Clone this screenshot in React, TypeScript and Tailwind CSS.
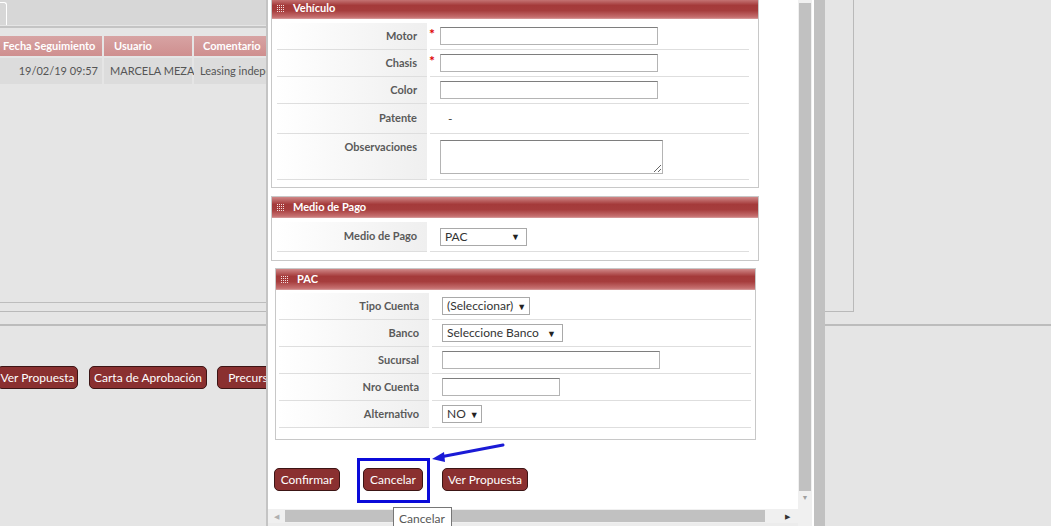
import React from 'react'

const headerBg = "bg-[linear-gradient(#d08888,#a43a3a_35%,#a63d3d_60%,#c67070_92%,#d9a3a3)]";

function Grip() {
    const dots = [];
    for (let r = 0; r < 4; r++) for (let c = 0; c < 4; c++) dots.push(<rect key={`${r}-${c}`} x={c * 2} y={r * 2} width="1" height="1" fill="#f3dede" />);
    return <svg width="8" height="8" viewBox="0 0 8 8" className="shrink-0">{dots}</svg>;
}

function BoxHeader({ title }: { title: string }) {
    return (
        <div className={`flex h-[21px] items-center gap-[8px] pl-[5px] ${headerBg}`}>
            <Grip />
            <span className="text-[11px] font-bold text-white">{title}</span>
        </div>
    );
}

function Row({ label, h, top, req, children }: { label: string; h: string; top?: boolean; req?: boolean; children?: React.ReactNode }) {
    return (
        <div className={`flex ${h}`}>
            <div className={`flex w-[150px] justify-end border-b border-[#dedede] bg-linear-to-r from-white to-[#efefef] pr-[10px] text-[11px] font-bold text-[#5a5a5a] ${top ? 'items-start pt-[5px]' : 'items-center'}`}>
                {label}
            </div>
            <div className="ml-[3px] flex flex-1 items-center border-b border-[#dedede]">
                <div className="flex w-[10px] self-start">
                    {req && <span className="ml-[-1px] mt-[4px] text-[14px] font-bold leading-none text-[#dd0000]">*</span>}
                </div>
                {children}
            </div>
        </div>
    );
}

function TextInput({ w }: { w: string }) {
    return <input className={`h-[18px] ${w} border border-[#b4b4b4] border-t-[#7e7e7e] bg-white`} />;
}

function Select({ w, text }: { w: string; text: string }) {
    return (
        <div className={`flex h-[18px] ${w} items-center justify-between gap-[4px] border border-[#a9a9a9] bg-white pl-[4px] pr-[6px] text-[12px] text-[#333]`}>
            <span className="whitespace-nowrap">{text}</span>
            <span className="text-[9px] leading-none text-[#222]">▼</span>
        </div>
    );
}

function Btn({ children, className = '' }: { children: React.ReactNode; className?: string }) {
    return (
        <div className={`flex h-[23px] items-center justify-center whitespace-nowrap rounded-[5px] border border-[#3c1515] bg-[#8a3030] text-[12px] text-white ${className}`}>
            {children}
        </div>
    );
}

export default function App() {
    return (
        <div className="relative h-[526px] w-[1051px] overflow-hidden bg-[#e5e5e5] font-['Lato','Open_Sans',sans-serif]">
            {/* page behind the dialog */}
            <div className="flex h-[312px] w-[854px] flex-col border-r border-b border-[#b9b9b9]">
                <div className="h-[28px] w-[800px] border-b-2 border-[#c4c4c4]">
                    <div className="h-[25px] bg-[#d7d7d7] pt-[2px]">
                        <div className="h-[23px] w-[7px] rounded-tr-[3px] border-t border-r border-white" />
                    </div>
                </div>
                <div className="mt-[8px] flex gap-[2px] whitespace-nowrap text-[11px]">
                    <div className="flex h-[20px] w-[102px] items-center bg-[linear-gradient(#d7a3a3,#cf8f8f)] pl-[3px] font-bold text-white">Fecha Seguimiento</div>
                    <div className="flex h-[20px] w-[88px] items-center bg-[linear-gradient(#d7a3a3,#cf8f8f)] pl-[10px] font-bold text-white">Usuario</div>
                    <div className="flex h-[20px] w-[200px] items-center bg-[linear-gradient(#d7a3a3,#cf8f8f)] pl-[9px] font-bold text-white">Comentario</div>
                </div>
                <div className="mt-[2px] flex gap-[2px] whitespace-nowrap text-[11px] text-[#555]">
                    <div className="flex h-[26px] w-[102px] items-center justify-end bg-[#dcdcdc] pr-[4px]">19/02/19 09:57</div>
                    <div className="flex h-[26px] w-[88px] items-center bg-[#dcdcdc] pl-[6px]">MARCELA MEZA</div>
                    <div className="flex h-[26px] w-[200px] items-center bg-[#dcdcdc] pl-[6px]">Leasing independiente</div>
                </div>
                <div className="mt-auto mb-[8px] h-px w-[800px] bg-[#bdbdbd]" />
            </div>
            <div className="mt-[12px] h-[2px] w-full bg-[#bcbcbc]" />
            <div className="mt-[40px] flex">
                <Btn className="ml-[-3px] w-[81px]">Ver Propuesta</Btn>
                <Btn className="ml-[11px] w-[118px]">Carta de Aprobación</Btn>
                <Btn className="ml-[10px] w-[68px]">Precursa</Btn>
            </div>

            {/* dialog */}
            <div className="absolute top-0 left-[266px] flex h-[526px] w-[559px] border-l-2 border-[#c4c4c4] bg-white">
                <div className="flex w-[530px] flex-col">
                    <div className="h-[509px] overflow-hidden pl-[3px]">
                        <div className="mt-[-3px] w-[488px] border border-[#c8c8c8] pb-[7px]">
                            <BoxHeader title="Vehículo" />
                            <div className="mt-[4px] pl-[5px] pr-[9px]">
                                <Row label="Motor" h="h-[27px]" req><TextInput w="w-[218px]" /></Row>
                                <Row label="Chasis" h="h-[27px]" req><TextInput w="w-[218px]" /></Row>
                                <Row label="Color" h="h-[27px]"><TextInput w="w-[218px]" /></Row>
                                <Row label="Patente" h="h-[30px]"><span className="pl-[8px] text-[12px] text-[#444]">-</span></Row>
                                <Row label="Observaciones" h="h-[46px]" top>
                                    <textarea className="h-[34px] w-[223px] border border-[#b4b4b4] border-t-[#7e7e7e] bg-white" />
                                </Row>
                            </div>
                        </div>

                        <div className="mt-[8px] w-[488px] border border-[#c8c8c8] pb-[8px]">
                            <BoxHeader title="Medio de Pago" />
                            <div className="mt-[4px] pl-[5px] pr-[9px]">
                                <Row label="Medio de Pago" h="h-[30px]"><Select w="w-[87px]" text="PAC" /></Row>
                            </div>
                        </div>

                        <div className="mt-[7px] ml-[4px] w-[481px] border border-[#c8c8c8] pb-[11px]">
                            <BoxHeader title="PAC" />
                            <div className="mt-[3px] pl-[3px] pr-[4px]">
                                <Row label="Tipo Cuenta" h="h-[27px]"><Select w="w-[88px]" text="(Seleccionar)" /></Row>
                                <Row label="Banco" h="h-[27px]"><Select w="w-[121px]" text="Seleccione Banco" /></Row>
                                <Row label="Sucursal" h="h-[27px]"><TextInput w="w-[218px]" /></Row>
                                <Row label="Nro Cuenta" h="h-[27px]"><TextInput w="w-[118px]" /></Row>
                                <Row label="Alternativo" h="h-[27px]"><Select w="w-[40px]" text="NO" /></Row>
                            </div>
                        </div>

                        <div className="mt-[28px] ml-[3px] flex">
                            <Btn className="w-[66px]">Confirmar</Btn>
                            <Btn className="ml-[23px] w-[60px]">Cancelar</Btn>
                            <Btn className="ml-[19px] w-[86px]">Ver Propuesta</Btn>
                        </div>
                    </div>
                    {/* horizontal scrollbar */}
                    <div className="flex h-[14px] items-center bg-[#f0f0f0]">
                        <div className="flex w-[17px] justify-center text-[7px] text-[#b0b0b0]">◀</div>
                        <div className="h-[12px] w-[480px] bg-[#c1c1c1]" />
                        <div className="flex flex-1 justify-end pr-[8px] text-[7px] text-[#333]">▶</div>
                    </div>
                    <div className="h-[3px] bg-[#ececec]" />
                </div>
                {/* vertical scrollbar */}
                <div className="flex w-[14px] flex-col bg-[#f0f0f0]">
                    <div className="mx-[1px] mt-[3px] h-[488px] bg-[#c1c1c1]" />
                    <div className="mt-[1px] flex justify-center text-[7px] text-[#a0a0a0]">▼</div>
                </div>
                <div className="w-[2px]" />
                <div className="w-[11px] bg-[#c1c1c1]" />
            </div>

            {/* annotation */}
            <div className="absolute top-[458px] left-[357px] h-[45px] w-[73px] border-[3px] border-[#0b0bd9]" />
            <svg className="absolute top-[440px] left-[428px]" width="80" height="24" viewBox="0 0 80 24">
                <line x1="75" y1="5" x2="12" y2="17" stroke="#1a1ad6" strokeWidth="3" strokeLinecap="round" />
                <polygon points="4,19 16,12 17,22" fill="#1a1ad6" />
            </svg>
            <div className="absolute top-[507px] left-[393px] h-[24px] w-[59px] border border-[#767676] bg-white pt-[2px] pl-[5px] text-[12px] text-[#575757]">
                Cancelar
            </div>
        </div>
    );
}
